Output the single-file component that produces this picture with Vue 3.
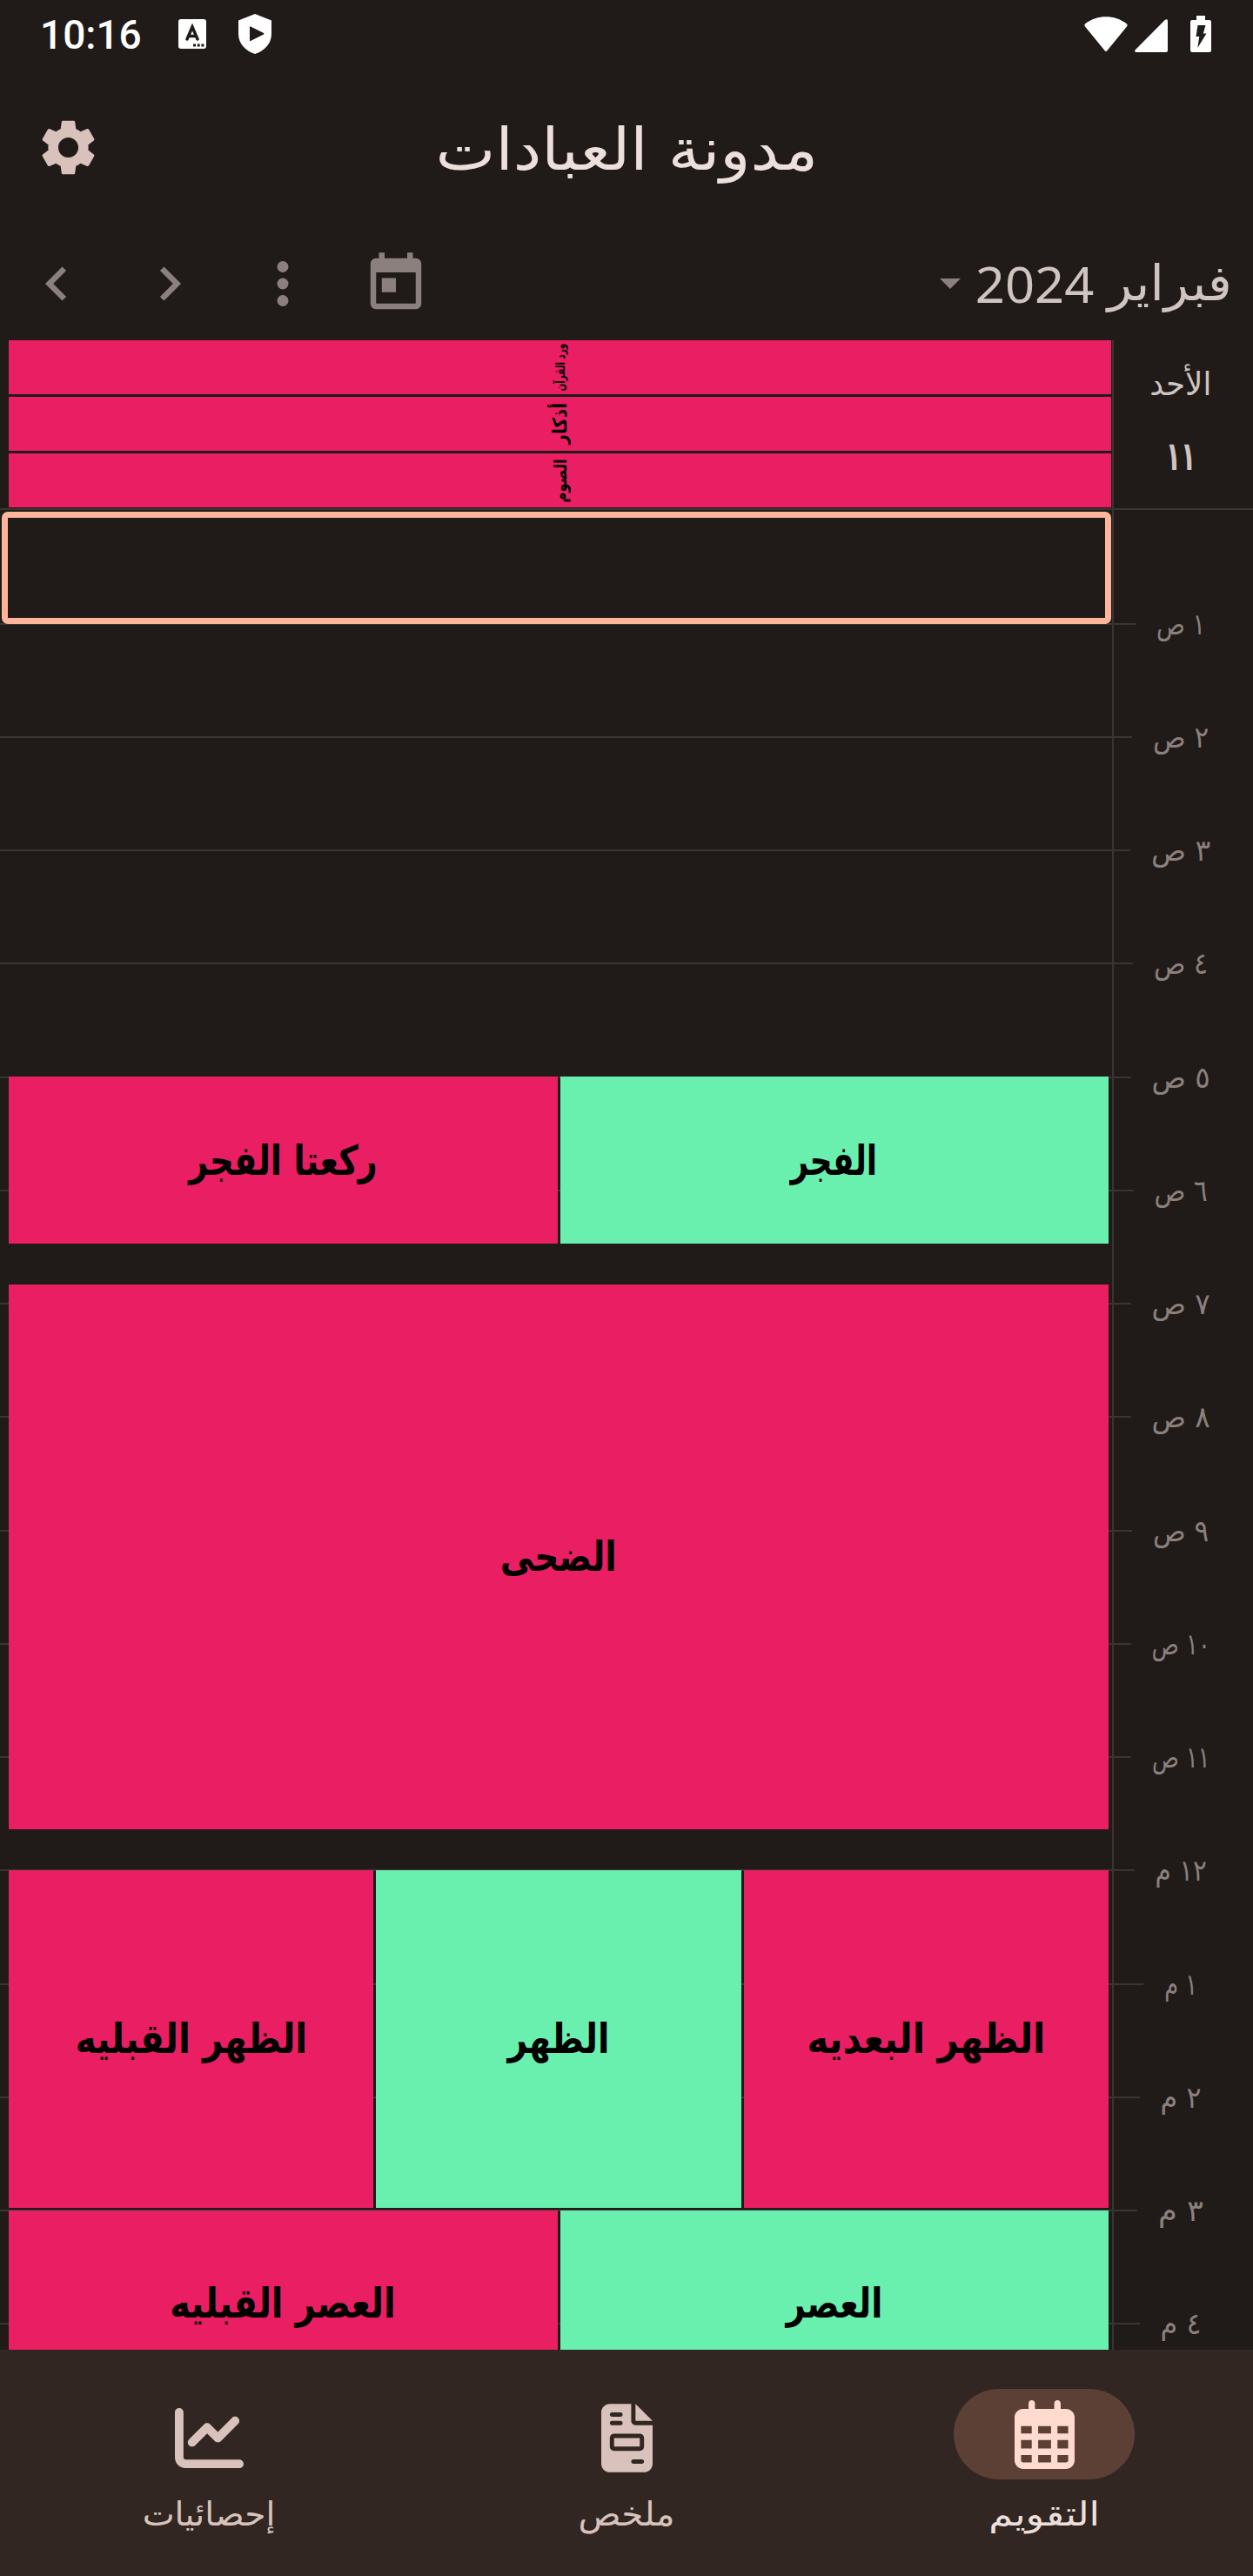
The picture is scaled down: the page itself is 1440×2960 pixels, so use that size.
<script setup>
// Condenses a label horizontally to a given ink width, keeping its height;
// the small allowance covers the side bearings of the outer letters
const vFit = {
  mounted(el, { value }) {
    el.style.transform = `scaleX(${(value * 1.018) / el.offsetWidth})`
  },
}

const HOUR = 130.25

const hours = [
  ['١ ص', 53], ['٢ ص', 61], ['٣ ص', 65], ['٤ ص', 59], ['٥ ص', 64],
  ['٦ ص', 58], ['٧ ص', 64], ['٨ ص', 64], ['٩ ص', 61], ['١٠ ص', 64],
  ['١١ ص', 63], ['١٢ م', 56], ['١ م', 35], ['٢ م', 44], ['٣ م', 49], ['٤ م', 44],
]

const allDay = [
  { name: 'ورد القرآن', width: 54, size: 15 },
  { name: 'أذكار', width: 47, size: 22 },
  { name: 'الصوم', width: 49, size: 20 },
]

const slots = [
  { start: 5, length: 1.477, items: [['ركعتا الفجر', 213, 'missed'], ['الفجر', 98, 'done']] },
  { start: 6.835, length: 4.806, items: [['الضحى', 132, 'missed']] },
  { start: 12, length: 2.977, items: [['الظهر القبليه', 262, 'missed'], ['الظهر', 115, 'done'], ['الظهر البعديه', 269, 'missed']] },
  { start: 15, length: 1.643, items: [['العصر القبليه', 255, 'missed'], ['العصر', 109, 'done']] },
]

const tabs = [
  {
    name: 'إحصائيات', width: 150, box: '0 0 512 512', w: 79,
    path: 'M64 64c0-17.700-14.300-32-32-32S0 46.300 0 64V400c0 44.200 35.800 80 80 80H480c17.700 0 32-14.300 32-32s-14.300-32-32-32H80c-8.800 0-16-7.200-16-16V64zm406.600 86.600c12.500-12.500 12.500-32.800 0-45.300s-32.800-12.500-45.300 0L320 210.700l-57.400-57.400c-12.500-12.500-32.800-12.500-45.300 0l-112 112c-12.500 12.500-12.500 32.800 0 45.300s32.800 12.500 45.300 0L240 221.300l57.400 57.400c12.500 12.500 32.800 12.500 45.300 0l128-128z',
  },
  {
    name: 'ملخص', width: 109, box: '0 0 384 512', w: 59,
    path: 'M64 0C28.700 0 0 28.700 0 64V448c0 35.300 28.700 64 64 64H320c35.300 0 64-28.700 64-64V160H256c-17.700 0-32-14.300-32-32V0H64zM256 0V128H384L256 0zM80 64h64c8.800 0 16 7.200 16 16s-7.200 16-16 16H80c-8.800 0-16-7.200-16-16s7.200-16 16-16zm0 64h64c8.800 0 16 7.200 16 16s-7.200 16-16 16H80c-8.800 0-16-7.200-16-16s7.200-16 16-16zm16 96H288c17.700 0 32 14.300 32 32v64c0 17.700-14.300 32-32 32H96c-17.700 0-32-14.300-32-32V256c0-17.700 14.300-32 32-32zm0 32v64H288V256H96zM240 416h64c8.800 0 16 7.200 16 16s-7.200 16-16 16H240c-8.800 0-16-7.200-16-16s7.200-16 16-16z',
  },
  {
    name: 'التقويم', width: 125, box: '0 0 448 512', w: 69, active: true,
    path: 'M152 24c0-13.300-10.700-24-24-24s-24 10.700-24 24V64H64C28.700 64 0 92.700 0 128V448c0 35.300 28.700 64 64 64H384c35.300 0 64-28.700 64-64V128c0-35.300-28.700-64-64-64H344V24c0-13.300-10.700-24-24-24s-24 10.700-24 24V64H152V24zM48 192h80v56H48zM176 192h96v56H176zM320 192h80v56H320zM48 296h80v64H48zM176 296h96v64H176zM320 296h80v64H320zM48 408h80v56H64c-8.800 0-16-7.200-16-16zM176 408h96v56H176zM320 408h80v40c0 8.800-7.200 16-16 16H320z',
  },
]
</script>

<template>
  <div class="app">
    <div class="status">
      <span class="clock">10:16</span>
      <svg class="s-card" viewBox="0 0 32 34" width="32" height="34">
        <rect width="32" height="34" rx="3" fill="#fff" />
        <path d="M10 23L16 9l6 14M12 19.500h8" fill="none" stroke="#201a18" stroke-width="3.500" stroke-linecap="round" />
        <path d="M17 28.500h3v3h-3zM21.700 28.500h3v3h-3zM26.400 28.500h3v3h-3z" fill="#201a18" />
      </svg>
      <svg class="s-shield" viewBox="0 0 38 46" width="38" height="46">
        <path d="M19 0L38 7.500V23c0 11-8 19.500-19 23C8 42.500 0 34 0 23V7.500z" fill="#fff" />
        <path d="M13 15v15.500q0 1 1 .5L29 23.500q1-.7 0-1.400L14 14.500q-1-.5-1 .5z" fill="#201a18" />
      </svg>
      <span class="grow"></span>
      <svg viewBox="0 0 50 40" width="50" height="40">
        <path d="M1 11.500q-1.500-2 .5-3.500C15-2.500 35-2.500 48.500 8q2 1.500.5 3.500L26.500 39q-1.500 1.800-3 0z" fill="#fff" />
      </svg>
      <svg class="s-cell" viewBox="0 0 38 38" width="38" height="38">
        <path d="M35 .8q3-1.800 3 1.500V36q0 2-2 2H2q-3 0-1-3z" fill="#fff" />
      </svg>
      <svg class="s-battery" viewBox="0 0 24 42" width="24" height="42">
        <path d="M7 0h10v5h5q2 0 2 2v33q0 2-2 2H2q-2 0-2-2V7q0-2 2-2h5z" fill="#fff" />
        <path d="M8.500 11h9L14.800 20.500H18.500L8.300 37l2-13H6.500z" fill="#201a18" />
      </svg>
    </div>

    <header class="bar">
      <svg class="gear" viewBox="0 0 24 24" width="77" height="77">
        <path fill-rule="evenodd" d="M19.140 12.940c.04-.3.060-.610.060-.940 0-.320-.020-.640-.070-.940l2.030-1.580c.180-.140.230-.410.120-.610l-1.920-3.320c-.120-.220-.370-.290-.590-.220l-2.390.960c-.5-.380-1.030-.7-1.620-.940l-.360-2.540c-.040-.240-.240-.410-.480-.410h-3.840c-.240 0-.430.170-.470.410l-.360 2.540c-.590.240-1.130.570-1.620.940l-2.390-.960c-.220-.080-.470 0-.590.220L2.740 8.870c-.120.210-.080.470.120.610l2.030 1.580c-.05.3-.09.630-.09.940s.02.640.07.940l-2.030 1.580c-.180.140-.230.410-.120.610l1.920 3.320c.120.220.370.290.590.220l2.390-.960c.5.380 1.030.7 1.620.940l.360 2.540c.05.240.24.410.48.410h3.840c.240 0 .440-.170.470-.410l.360-2.540c.590-.240 1.130-.560 1.620-.940l2.390.960c.220.080.470 0 .59-.220l1.920-3.320c.120-.220.070-.470-.120-.610zM12 15.600c-1.980 0-3.600-1.620-3.600-3.600s1.620-3.600 3.600-3.600 3.600 1.620 3.600 3.600-1.620 3.600-3.600 3.600z" />
      </svg>
      <h1><span v-fit="432" class="fit">مدونة العبادات</span></h1>
    </header>

    <div class="tools">
      <svg viewBox="0 0 24 24"><path d="M15.410 7.410L14 6l-6 6 6 6 1.410-1.410L10.830 12z" /></svg>
      <svg viewBox="0 0 24 24"><path d="M8.590 16.590L10 18l6-6-6-6-1.410 1.410L13.170 12z" /></svg>
      <svg viewBox="0 0 24 24"><circle cx="12" cy="6" r="2" /><circle cx="12" cy="12" r="2" /><circle cx="12" cy="18" r="2" /></svg>
      <svg viewBox="0 0 24 24"><path d="M19 3h-1V1h-2v2H8V1H6v2H5c-1.110 0-1.990.9-1.990 2L3 19c0 1.100.89 2 2 2h14c1.100 0 2-.9 2-2V5c0-1.100-.9-2-2-2zm0 16H5V8h14v11zM7 10h5v5H7z" /></svg>
      <span class="grow"></span>
      <i class="caret"></i>
      <div class="year"><span v-fit="134" class="fit">2024</span></div>
      <div class="month"><span v-fit="141" class="fit">فبراير</span></div>
    </div>

    <main class="calendar">
      <section class="head">
        <div class="all-day">
          <div v-for="e in allDay" :key="e.name" class="strip">
            <div class="turn">
              <span v-fit="e.width" class="fit" :style="{ fontSize: e.size + 'px' }">{{ e.name }}</span>
            </div>
          </div>
        </div>
        <div class="date">
          <div class="weekday"><span v-fit="70" class="fit">الأحد</span></div>
          <div class="day"><span v-fit="34" class="fit">١١</span></div>
        </div>
      </section>

      <section class="grid">
        <div class="rows">
          <div v-for="[label, width] in hours" :key="label" class="row" :style="{ height: HOUR + 'px' }">
            <i class="rule"></i>
            <div class="hour">
              <i class="tick"></i>
              <div class="hour-text" :style="{ width: width + 'px' }"><span v-fit="width + 2" class="fit">{{ label }}</span></div>
              <i class="grow"></i>
            </div>
          </div>
        </div>
        <div class="selected"></div>
        <div
          v-for="s in slots"
          :key="s.start"
          class="slot"
          :style="{ top: s.start * HOUR - 0.25 + 'px', height: s.length * HOUR + 'px' }"
        >
          <div v-for="[name, width, state] in s.items" :key="name" class="event" :class="state">
            <span v-fit="width" class="fit">{{ name }}</span>
          </div>
        </div>
      </section>
      <i class="axis"></i>
    </main>

    <nav class="tabs">
      <div v-for="t in tabs" :key="t.name" class="tab" :class="{ active: t.active }">
        <div class="pill">
          <svg :viewBox="t.box" :width="t.w" height="79"><path fill-rule="evenodd" :d="t.path" /></svg>
        </div>
        <div class="tab-text"><span v-fit="t.width" class="fit">{{ t.name }}</span></div>
      </div>
    </nav>
  </div>
</template>

<style>
body {
  background: #201a18;
}
</style>

<style scoped>
.app {
  width: 1440px;
  height: 2960px;
  display: flex;
  flex-direction: column;
  overflow: hidden;
  background: #201a18;
  color: #ede0dc;
  font-family: "DejaVu Sans", sans-serif;
  line-height: 1;
}
svg {
  display: block;
  flex: none;
}
.grow {
  flex: 1;
}
.fit {
  display: inline-block;
  flex: none;
  white-space: nowrap;
  direction: rtl;
}
.status {
  height: 78px;
  display: flex;
  align-items: center;
  padding: 0 48px 0 46px;
  color: #fff;
}
.clock {
  width: 159px;
  font: 500 46px/46px Roboto, sans-serif;
  padding-top: 2px;
}
.s-shield {
  margin-left: 37px;
}
.s-cell {
  margin: 3px 26px 0 8px;
}
.bar {
  height: 182px;
  display: flex;
  align-items: center;
  padding: 0 40px;
}
.gear {
  fill: #d8c2bb;
}
.bar h1 {
  flex: 1;
  margin: 6px 77px 0 0;
  text-align: center;
  font-size: 67px;
  font-weight: 400;
}
.tools {
  height: 131px;
  display: flex;
  align-items: center;
  padding: 0 25px 0 26px;
}
.tools svg {
  width: 78px;
  height: 78px;
  margin-right: 52px;
  fill: #8b807d;
}
.caret {
  border: 12.5px solid transparent;
  border-top-color: #8b807d;
  border-bottom: 0;
  margin-right: 18px;
}
.year,
.month {
  display: flex;
  justify-content: center;
  color: #d0c4c0;
}
.year {
  width: 134px;
  margin-right: 18px;
  font: 400 56px/56px "Noto Sans", sans-serif;
}
.month {
  width: 141px;
  font-size: 56px;
}
.calendar {
  height: 2308.5px;
  position: relative;
  overflow: hidden;
}
.head {
  height: 195px;
  box-sizing: border-box;
  border-bottom: 2px solid #3a3532;
  display: flex;
}
.all-day {
  width: 1267px;
  margin-left: 10px;
  display: flex;
  flex-direction: column;
  gap: 3px;
}
.strip {
  height: 62px;
  background: #e91e63;
  color: #000;
  display: flex;
  align-items: center;
  justify-content: center;
}
.turn {
  width: 60px;
  height: 24px;
  display: flex;
  align-items: center;
  justify-content: center;
  transform: rotate(-90deg);
  font-weight: 700;
}
.date {
  flex: 1;
  display: flex;
  flex-direction: column;
  align-items: center;
  padding-right: 3px;
  color: #d0c4c0;
}
.weekday {
  margin-top: 32px;
  font-size: 37px;
}
.day {
  margin-top: 41px;
  font-size: 46px;
  font-weight: 700;
}
.grid {
  height: 2114px;
  position: relative;
}
.rows {
  padding-top: 65.400px;
}
.row {
  display: flex;
  align-items: center;
}
.rule,
.tick {
  flex: 1;
  height: 2px;
  background: #3a3532;
}
.hour {
  width: 165px;
  display: flex;
  align-items: center;
}
.tick {
  margin-right: 26px;
}
.hour .grow {
  margin-left: 26px;
}
.hour-text {
  display: flex;
  justify-content: center;
  font-size: 34px;
  color: #8b807d;
}
.selected {
  position: absolute;
  left: 2px;
  top: 1.500px;
  width: 1275px;
  height: 129px;
  box-sizing: border-box;
  border: 7px solid #ffb59b;
  border-radius: 7px;
  background: #201a18;
}
.slot {
  position: absolute;
  left: 10px;
  width: 1264px;
  display: flex;
  gap: 3px;
}
.event {
  flex: 1;
  min-width: 0;
  display: flex;
  align-items: center;
  justify-content: center;
  color: #000;
  font-size: 47px;
  font-weight: 700;
}
.missed {
  background: #e91e63;
}
.done {
  background: #69f0ae;
}
.axis {
  position: absolute;
  left: 1278px;
  top: 0;
  width: 2px;
  height: 100%;
  background: #3a3532;
}
.tabs {
  flex: 1;
  display: flex;
  background: #312622;
}
.tab {
  flex: 1;
  display: flex;
  flex-direction: column;
  align-items: center;
  color: #d8c2bb;
}
.pill {
  width: 208px;
  height: 104px;
  margin-top: 45.500px;
  border-radius: 52px;
  display: flex;
  align-items: center;
  justify-content: center;
}
.pill svg {
  fill: #d8c2bb;
  margin-top: 8px;
}
.active .pill {
  background: #5d4035;
}
.active .pill svg {
  fill: #ffdbcf;
  margin-top: 0;
}
.tab-text {
  margin-top: 21px;
  font-size: 38px;
}
.active .tab-text {
  color: #ede0dc;
}
</style>
